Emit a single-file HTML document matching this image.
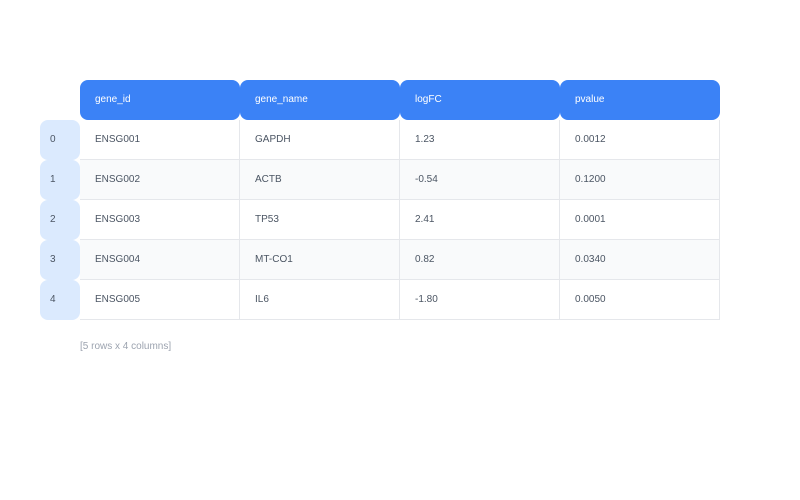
<!DOCTYPE html>
<html><head><style>
body{margin:0;width:800px;height:500px;background:#fff;font-family:"Liberation Sans",sans-serif;font-size:10px;color:#4b5563;position:relative}
.h{position:absolute;top:80px;height:40px;width:160px;background:#3b82f6;color:#fff;border-radius:8px;box-sizing:border-box;padding-left:15px;line-height:40px}
.i{position:absolute;left:40px;width:40px;height:40px;background:#dbeafe;border-radius:8px;box-sizing:border-box;padding-left:10px;line-height:40px;color:#4b5563}
.r{position:absolute;left:80px;width:640px;height:40px;border-bottom:1px solid #e5e7eb;box-sizing:border-box}
.c{position:absolute;top:0;height:39px;width:160px;box-sizing:border-box;padding-left:15px;line-height:40px;border-right:1px solid #e5e7eb}
.f{position:absolute;left:80px;top:341px;color:#9ca3af;font-size:10px}
</style></head><body>
<div class="h" style="left:80px">gene_id</div>
<div class="h" style="left:240px">gene_name</div>
<div class="h" style="left:400px">logFC</div>
<div class="h" style="left:560px">pvalue</div>

<div class="r" style="top:120px;background:#fff"><div class="c" style="left:0">ENSG001</div><div class="c" style="left:160px">GAPDH</div><div class="c" style="left:320px">1.23</div><div class="c" style="left:480px">0.0012</div></div>
<div class="r" style="top:160px;background:#f9fafb"><div class="c" style="left:0">ENSG002</div><div class="c" style="left:160px">ACTB</div><div class="c" style="left:320px">-0.54</div><div class="c" style="left:480px">0.1200</div></div>
<div class="r" style="top:200px;background:#fff"><div class="c" style="left:0">ENSG003</div><div class="c" style="left:160px">TP53</div><div class="c" style="left:320px">2.41</div><div class="c" style="left:480px">0.0001</div></div>
<div class="r" style="top:240px;background:#f9fafb"><div class="c" style="left:0">ENSG004</div><div class="c" style="left:160px">MT-CO1</div><div class="c" style="left:320px">0.82</div><div class="c" style="left:480px">0.0340</div></div>
<div class="r" style="top:280px;background:#fff"><div class="c" style="left:0">ENSG005</div><div class="c" style="left:160px">IL6</div><div class="c" style="left:320px">-1.80</div><div class="c" style="left:480px">0.0050</div></div>

<div class="i" style="top:120px">0</div>
<div class="i" style="top:160px">1</div>
<div class="i" style="top:200px">2</div>
<div class="i" style="top:240px">3</div>
<div class="i" style="top:280px">4</div>
<div class="f">[5 rows x 4 columns]</div>
</body></html>
